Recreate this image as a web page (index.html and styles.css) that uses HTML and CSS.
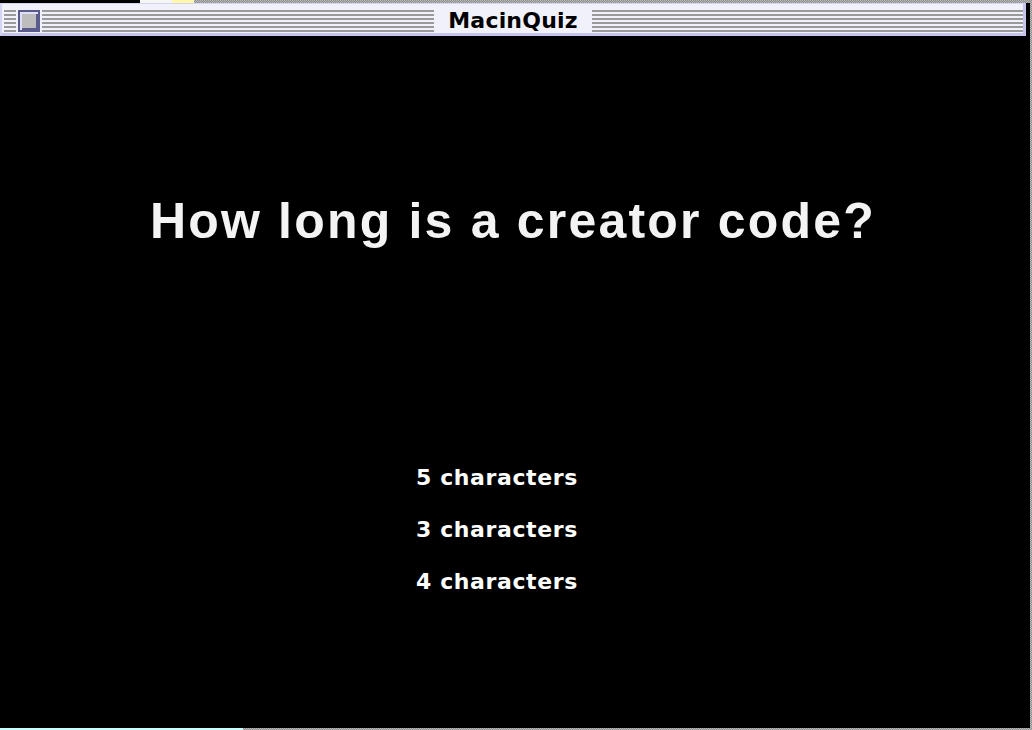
FILE: index.html
```html
<!DOCTYPE html>
<html>
<head>
<meta charset="utf-8">
<title>MacinQuiz</title>
<link rel="stylesheet" href="styles.css">
</head>
<body>
<div class="desk">
  <div class="topstrip">
    <span class="seg-black"></span><span class="seg-white"></span><span class="seg-yellow"></span><span class="seg-rest"></span>
  </div>
  <div class="window">
    <div class="titlebar">
      <span class="stripes stripes-left"></span>
      <span class="closebox"><span class="closebox-inner"></span></span>
      <span class="stripes stripes-mid"></span>
      <span class="title">MacinQuiz</span>
      <span class="stripes stripes-right"></span>
    </div>
    <div class="content">
      <h1 class="question">How long is a creator code?</h1>
      <ul class="answers">
        <li class="answer">5 characters</li>
        <li class="answer">3 characters</li>
        <li class="answer">4 characters</li>
      </ul>
    </div>
  </div>
  <div class="bottomstrip"><span class="seg-cyan"></span></div>
</div>
</body>
</html>
```
FILE: styles.css
```css
* { box-sizing: border-box; }
html, body { margin: 0; padding: 0; background: #000; }
.desk {
  width: 1032px;
  height: 730px;
  display: flex;
  flex-direction: column;
  overflow: hidden;
  background: repeating-conic-gradient(#8a8a8a 0 25%, #bdbdbd 0 50%) 0 0 / 2px 2px;
}
.topstrip { height: 3px; display: flex; flex: 0 0 3px; }
.seg-black { width: 140px; background: #000; }
.seg-white { width: 32px; background: #f6f6f6; }
.seg-yellow { width: 22px; background: #fff8a8; }
.seg-rest { flex: 1; }

.window {
  width: 1030px;
  flex: 0 0 725px;
  background: #000;
  display: flex;
  flex-direction: column;
}
.titlebar {
  width: 1026px;
  height: 33px;
  flex: 0 0 33px;
  display: flex;
  align-items: stretch;
  background: #f1f1fb;
  border-top: 1px solid #d4d4f4;
  border-left: 2px solid #d4d4f4;
  border-right: 3px solid #c4c4ec;
  border-bottom: 3px solid #c4c4ec;
  padding: 6px 0 1px 2px;
}
.stripes {
  display: block;
  height: 22px;
  background: repeating-linear-gradient(to bottom, #9a9a9a 0 2px, transparent 2px 4px);
}
.stripes-left { flex: 0 0 12px; }
.stripes-mid { flex: 0 0 392px; }
.stripes-right { flex: 1 1 auto; }
.closebox {
  flex: 0 0 22px;
  width: 22px;
  height: 22px;
  margin: 0 2px;
  border: 2px solid #5a5a8c;
  background: #dedef6;
  padding: 2px 0 0 2px;
  display: block;
}
.closebox-inner {
  display: block;
  width: 16px;
  height: 16px;
  background: #bdbdbd;
  border-right: 2px solid #5a5a8c;
  border-bottom: 2px solid #5a5a8c;
}
.title {
  flex: 0 0 158px;
  text-align: center;
  font-family: "DejaVu Sans", sans-serif;
  font-weight: bold;
  font-size: 22px;
  line-height: 22px;
  color: #000;
  letter-spacing: 0.2px;
}

.content {
  width: 1026px;
  flex: 1;
  background: #000;
  padding-top: 160px;
}
.question {
  margin: 0;
  text-align: center;
  font-family: "Liberation Sans", Arial, sans-serif;
  font-weight: bold;
  font-size: 50px;
  line-height: 50px;
  letter-spacing: 2.2px;
  color: #f3f3f3;
}
.answers {
  list-style: none;
  margin: 206px 0 0 0;
  padding: 0 0 0 416px;
}
.answer {
  font-family: "DejaVu Sans", sans-serif;
  font-weight: bold;
  font-size: 22px;
  line-height: 52px;
  letter-spacing: 0.6px;
  color: #fff;
}

.bottomstrip { flex: 0 0 2px; height: 2px; display: flex; }
.seg-cyan { width: 243px; background: #c8ffff; }
```
